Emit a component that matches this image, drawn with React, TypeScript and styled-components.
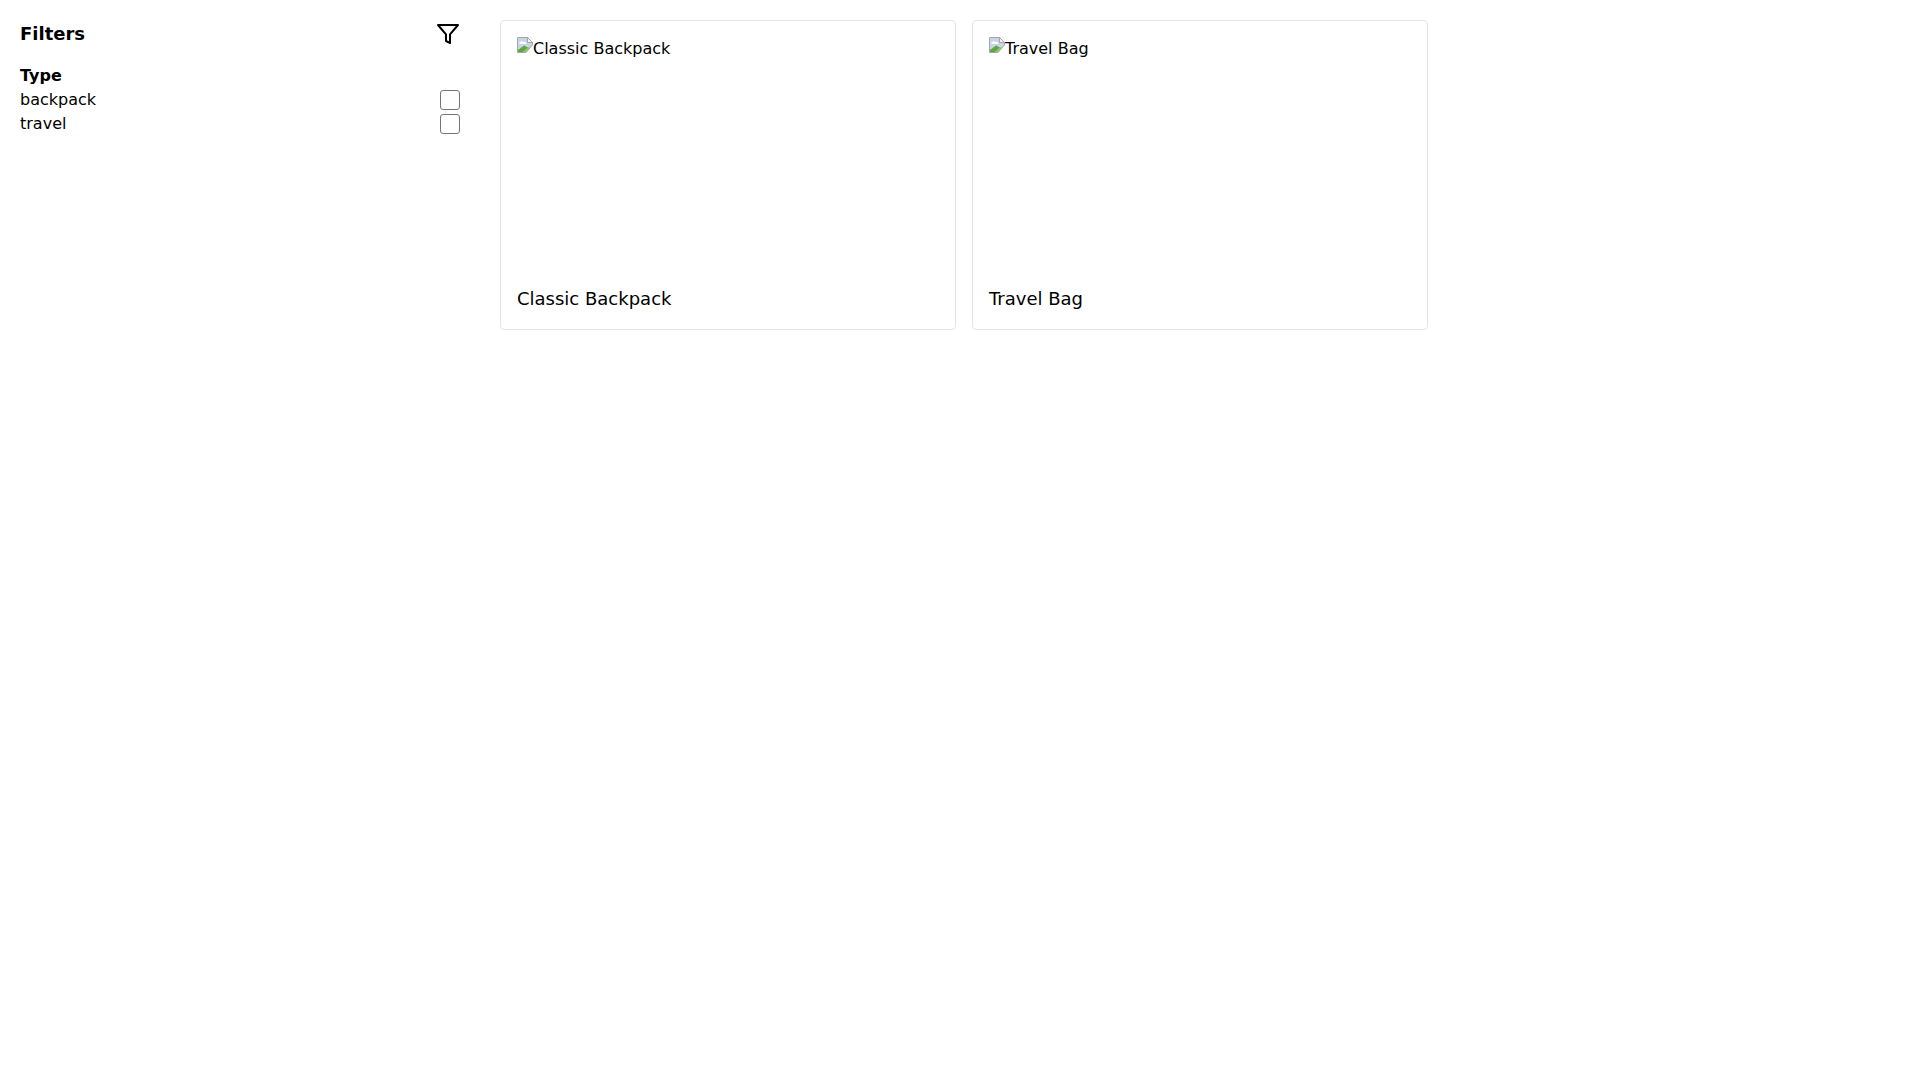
import React, { ComponentType } from 'react';
import styled, { createGlobalStyle } from 'styled-components';
import { FiFilter } from 'react-icons/fi';

interface Product {
    name: string;
}

const products: Product[] = [{ name: 'Classic Backpack' }, { name: 'Travel Bag' }];
const types = ['backpack', 'travel'];

const GlobalStyle = createGlobalStyle`
    html, body {
        margin: 0;
        background: #fff;
        color: #000;
        font-family: 'DejaVu Sans', sans-serif;
        font-size: 16px;
    }
`;

const Page = styled.div`
    display: flex;
    align-items: flex-start;
`;

const Sidebar = styled.aside`
    box-sizing: border-box;
    width: 480px;
    flex: none;
    padding: 20px;
`;

const SidebarHeader = styled.div`
    display: flex;
    justify-content: space-between;
    align-items: center;
    height: 28px;
    margin-bottom: 16px;
`;

const SidebarTitle = styled.h2`
    margin: 0 0 2px;
    font-size: 18px;
    font-weight: 700;
`;

const FilterIcon = styled(FiFilter)`
    width: 24px;
    height: 24px;
`;

const GroupTitle = styled.h3`
    margin: 0;
    font-size: 16px;
    line-height: 24px;
    font-weight: 700;
`;

const OptionRow = styled.label`
    display: flex;
    justify-content: space-between;
    align-items: flex-start;
    height: 24px;
    font-size: 16px;
    line-height: 23px;
`;

const Checkbox = styled.input`
    appearance: none;
    box-sizing: border-box;
    width: 20px;
    height: 20px;
    margin: 2px 0 0;
    border: 1px solid #767676;
    border-radius: 3px;
    background: #fff;
`;

const Grid = styled.main`
    flex: 1;
    display: grid;
    grid-template-columns: repeat(3, 1fr);
    gap: 16px;
    padding: 20px;
`;

const Card = styled.article`
    box-sizing: border-box;
    height: 310px;
    padding: 16px;
    border: 1px solid #e5e5e5;
    border-radius: 4px;
`;

const ImageSlot = styled.div`
    display: flex;
    align-items: flex-start;
    height: 232px;
    margin-bottom: 16px;
`;

const BrokenIcon = styled.svg`
    flex: none;
    width: 16px;
    height: 16px;
`;

const AltText = styled.span`
    padding-top: 2px;
    font-size: 16px;
    line-height: 20px;
`;

const CardName = styled.h3`
    margin: 0;
    font-size: 18px;
    line-height: 27px;
    font-weight: 400;
`;

const BrokenImage: ComponentType = () => (
    <BrokenIcon viewBox="0 0 16 16">
        <path d="M0.5 15.5V0.5H10.5L15.5 5.5V8L9 15.5Z" fill="#c8d4e8" stroke="#a6a6a6" />
        <path d="M10.5 0.5V5.5H15.5Z" fill="#f4f4f4" stroke="#a6a6a6" />
        <path d="M2 6.5C3 4.5 5 4 6.5 5C8 4.5 9.5 5.5 9.5 7H3Z" fill="#fff" />
        <path d="M1 15V13L7 8.5L11 10.5L6 15Z" fill="#5fa83c" />
        <path d="M6 15L11 10.5L13 10L9 15Z" fill="#8bc564" />
    </BrokenIcon>
);

export default function App() {
    return (
        <Page>
            <GlobalStyle />
            <Sidebar>
                <SidebarHeader>
                    <SidebarTitle>Filters</SidebarTitle>
                    <FilterIcon />
                </SidebarHeader>
                <GroupTitle>Type</GroupTitle>
                {types.map((type) => (
                    <OptionRow key={type}>
                        {type}
                        <Checkbox type="checkbox" />
                    </OptionRow>
                ))}
            </Sidebar>
            <Grid>
                {products.map((product) => (
                    <Card key={product.name}>
                        <ImageSlot>
                            <BrokenImage />
                            <AltText>{product.name}</AltText>
                        </ImageSlot>
                        <CardName>{product.name}</CardName>
                    </Card>
                ))}
            </Grid>
        </Page>
    );
}
